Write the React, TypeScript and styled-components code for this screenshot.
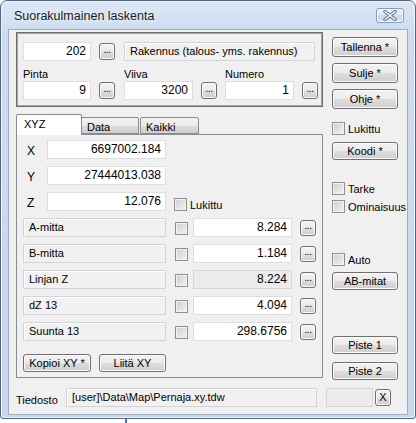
import React from "react";
import styled, { createGlobalStyle } from "styled-components";

const GlobalStyle = createGlobalStyle`
  html, body {
    margin: 0;
    padding: 0;
    background: #ffffff;
  }
  body {
    font-family: "Liberation Sans", Arial, sans-serif;
    font-size: 11px;
    color: #000;
  }
  * {
    box-sizing: border-box;
  }
`;

const Window = styled.div`
  width: 416px;
  height: 419px;
  border: 1px solid #56677d;
  border-radius: 7px 7px 3px 3px;
  background: linear-gradient(#dce8f6 0px, #cddcf0 30px, #c6d7ee 100%);
  box-shadow: inset 0 0 0 1px #eef4fb;
  display: flex;
  flex-direction: column;
  padding: 0 7px 3px 7px;
`;

const TitleBar = styled.div`
  height: 28px;
  display: flex;
  align-items: flex-start;
  justify-content: space-between;
`;

const Title = styled.span`
  margin: 8px 0 0 6px;
  font-size: 12.5px;
  color: #1b1b1b;
  text-shadow: 0 0 6px #ffffff;
`;

const CloseButton = styled.div`
  width: 28px;
  height: 15px;
  margin: 7px 4px 0 0;
  border: 1px solid #8b9bb0;
  border-radius: 3px;
  background: linear-gradient(#eef3f9, #dbe5f1 50%, #ccd9ea 50%, #d7e2ef);
  box-shadow: inset 0 0 0 1px #f6f9fc;
  display: flex;
  align-items: center;
  justify-content: center;
`;

const Client = styled.div`
  flex: 1;
  background: #f0f0f0;
  border: 1px solid #9fb0c6;
  padding: 2px 9px 0 7px;
  display: flex;
  flex-direction: column;
`;

const MainRow = styled.div`
  display: flex;
  gap: 9px;
`;

const LeftColumn = styled.div`
  width: 307px;
  display: flex;
  flex-direction: column;
`;

const GroupBox = styled.div`
  height: 75px;
  border: 1px solid #6e6e6e;
  box-shadow: inset 0 0 0 1px #a4a4a4;
  padding: 9px 0 0 6px;
  display: grid;
  grid-template-columns: 92px 92px 92px;
  grid-template-rows: 19px 20px 19px;
  column-gap: 9px;
`;

const WideCell = styled.div`
  grid-column: 2 / span 2;
`;

const FieldPair = styled.div`
  display: flex;
  align-items: center;
  gap: 8px;
`;

const GroupLabel = styled.div`
  align-self: end;
  padding-bottom: 1px;
`;

const Input = styled.div<{ $width: number; $readOnly?: boolean }>`
  width: ${(p) => p.$width}px;
  height: 19px;
  flex-shrink: 0;
  background: ${(p) => (p.$readOnly ? "#ececec" : "#ffffff")};
  border: 1px solid ${(p) => (p.$readOnly ? "#d6d6d6" : "#dedede")};
  font-size: 12px;
  line-height: 17px;
  text-align: right;
  padding: 0 4px;
  white-space: nowrap;
  overflow: hidden;
`;

const ReadOnlyBox = styled.div<{ $width: number }>`
  width: ${(p) => p.$width}px;
  height: 19px;
  flex-shrink: 0;
  background: #f1f1f1;
  border: 1px solid #d4d4d4;
  box-shadow: inset 1px 1px 0 #ffffff;
  line-height: 17px;
  padding: 0 5px;
  white-space: nowrap;
  overflow: hidden;
`;

const Button = styled.div<{ $width?: number; $height?: number }>`
  width: ${(p) => (p.$width ? `${p.$width}px` : "100%")};
  height: ${(p) => p.$height ?? 20}px;
  flex-shrink: 0;
  border: 1px solid #707070;
  border-radius: 3px;
  background: linear-gradient(#f3f3f3 0%, #ebebeb 48%, #dddddd 52%, #cfcfcf 100%);
  box-shadow: inset 0 0 0 1px #fbfbfb;
  display: flex;
  align-items: center;
  justify-content: center;
  font-size: 11px;
  line-height: 1;
  white-space: nowrap;
`;

const DotsButton = styled(Button)`
  width: 16px;
  height: 17px;
  font-size: 10px;
  align-items: flex-end;
  padding-bottom: 4px;
  letter-spacing: -0.5px;
`;

const ClearButton = styled(Button)`
  width: 16px;
  height: 17px;
  margin-left: 2px;
`;

const TabStrip = styled.div`
  margin-top: 7px;
  height: 20px;
  display: flex;
  align-items: flex-end;
  position: relative;
  z-index: 1;
`;

const Tab = styled.div<{ $active?: boolean; $width: number; $gap?: number }>`
  width: ${(p) => p.$width}px;
  height: ${(p) => (p.$active ? 21 : 17)}px;
  margin-bottom: ${(p) => (p.$active ? -1 : 0)}px;
  margin-left: ${(p) => p.$gap ?? 0}px;
  margin-right: -1px;
  border: 1px solid #898c95;
  border-bottom: ${(p) => (p.$active ? "none" : "1px solid #898c95")};
  border-radius: 2px 2px 0 0;
  background: ${(p) =>
    p.$active ? "#ffffff" : "linear-gradient(#f2f2f2, #ebebeb 50%, #dddddd 50%, #cfcfcf)"};
  padding: ${(p) => (p.$active ? "3px 0 0 7px" : "3px 0 0 5px")};
  font-size: 11px;
`;

const TabPanel = styled.div`
  height: 244px;
  border: 1px solid #898c95;
  background: #f0f0f0;
  padding: 5px 0 0 6px;
  display: flex;
  flex-direction: column;
  gap: 7px;
`;

const Row = styled.div`
  height: 19px;
  display: flex;
  align-items: center;
`;

const AxisLabel = styled.div`
  width: 24px;
  padding: 3px 0 0 4px;
  font-size: 12px;
  align-self: center;
`;

const CheckLabel = styled.label<{ $left?: number; $top?: number }>`
  display: flex;
  align-items: center;
  gap: 3px;
  margin-left: ${(p) => p.$left ?? 0}px;
  margin-top: ${(p) => p.$top ?? 0}px;
  font-size: 11px;
  white-space: nowrap;
`;

const CheckBox = styled.span`
  width: 13px;
  height: 13px;
  flex-shrink: 0;
  display: inline-block;
  border: 1px solid #8f8f8f;
  background: linear-gradient(135deg, #cdcdcd, #f4f4f4);
  box-shadow: inset 0 0 0 1px #f3f3f3;
`;

const RowCheck = styled(CheckBox)`
  margin: 2px 5px 0 9px;
`;

const RowButton = styled(DotsButton)`
  height: 16px;
  margin-left: 8px;
`;

const ButtonRow = styled.div`
  margin-top: 6px;
  display: flex;
  gap: 8px;
`;

const RightColumn = styled.div`
  width: 66px;
  display: flex;
  flex-direction: column;
  padding-top: 5px;
`;

const Spacer = styled.div<{ $h: number }>`
  height: ${(p) => p.$h}px;
  flex-shrink: 0;
`;

const FileRow = styled.div`
  margin-top: 8px;
  display: flex;
  align-items: center;
`;

const FileLabel = styled.div`
  width: 50px;
  padding: 5px 0 0 0;
  font-size: 11px;
`;

const FileSpare = styled.div`
  width: 47px;
  height: 19px;
  margin-left: 9px;
  background: #ececec;
  border: 1px solid #d6d6d6;
`;

const Tick = styled.div`
  width: 2px;
  height: 4px;
  margin-left: 125px;
  background: #2f7ad8;
`;

const CloseIcon = () => (
  <svg width="14" height="11" viewBox="0 0 14 11">
    <path d="M2 1.5 L12 9.5 M12 1.5 L2 9.5" stroke="#5f6f85" strokeWidth="3.4" strokeLinecap="round" />
    <path d="M2 1.5 L12 9.5 M12 1.5 L2 9.5" stroke="#f4f7fb" strokeWidth="1.6" strokeLinecap="round" />
  </svg>
);

type DataRowProps = { label: string; value: string; readOnly?: boolean };

const DataRow = ({ label, value, readOnly }: DataRowProps) => (
  <Row>
    <ReadOnlyBox $width={143}>{label}</ReadOnlyBox>
    <RowCheck />
    <Input $width={99} $readOnly={readOnly}>
      {value}
    </Input>
    <RowButton>...</RowButton>
  </Row>
);

const dataRows: DataRowProps[] = [
  { label: "A-mitta", value: "8.284" },
  { label: "B-mitta", value: "1.184" },
  { label: "Linjan Z", value: "8.224", readOnly: true },
  { label: "dZ 13", value: "4.094" },
  { label: "Suunta 13", value: "298.6756" },
];

const App = () => {
  return (
    <>
      <GlobalStyle />
      <Window>
        <TitleBar>
          <Title>Suorakulmainen laskenta</Title>
          <CloseButton>
            <CloseIcon />
          </CloseButton>
        </TitleBar>
        <Client>
          <MainRow>
            <LeftColumn>
              <GroupBox>
                <FieldPair>
                  <Input $width={68}>202</Input>
                  <DotsButton>...</DotsButton>
                </FieldPair>
                <WideCell>
                  <ReadOnlyBox $width={191}>Rakennus (talous- yms. rakennus)</ReadOnlyBox>
                </WideCell>
                <GroupLabel>Pinta</GroupLabel>
                <GroupLabel>Viiva</GroupLabel>
                <GroupLabel>Numero</GroupLabel>
                <FieldPair>
                  <Input $width={68}>9</Input>
                  <DotsButton>...</DotsButton>
                </FieldPair>
                <FieldPair>
                  <Input $width={69}>3200</Input>
                  <DotsButton>...</DotsButton>
                </FieldPair>
                <FieldPair>
                  <Input $width={69}>1</Input>
                  <DotsButton>...</DotsButton>
                </FieldPair>
              </GroupBox>

              <TabStrip>
                <Tab $active $width={66}>XYZ</Tab>
                <Tab $width={58}>Data</Tab>
                <Tab $width={59} $gap={2}>Kaikki</Tab>
              </TabStrip>
              <TabPanel>
                <Row>
                  <AxisLabel>X</AxisLabel>
                  <Input $width={119}>6697002.184</Input>
                </Row>
                <Row>
                  <AxisLabel>Y</AxisLabel>
                  <Input $width={119}>27444013.038</Input>
                </Row>
                <Row>
                  <AxisLabel>Z</AxisLabel>
                  <Input $width={119}>12.076</Input>
                  <CheckLabel $left={8} $top={6}>
                    <CheckBox />
                    Lukittu
                  </CheckLabel>
                </Row>
                {dataRows.map((r) => (
                  <DataRow key={r.label} {...r} />
                ))}
                <ButtonRow>
                  <Button $width={68} $height={18}>Kopioi XY *</Button>
                  <Button $width={67} $height={18}>Liitä XY</Button>
                </ButtonRow>
              </TabPanel>
            </LeftColumn>

            <RightColumn>
              <Button>Tallenna *</Button>
              <Spacer $h={6} />
              <Button>Sulje *</Button>
              <Spacer $h={6} />
              <Button>Ohje *</Button>
              <Spacer $h={13} />
              <CheckLabel>
                <CheckBox />
                Lukittu
              </CheckLabel>
              <Spacer $h={7} />
              <Button $height={18}>Koodi *</Button>
              <Spacer $h={22} />
              <CheckLabel>
                <CheckBox />
                Tarke
              </CheckLabel>
              <Spacer $h={5} />
              <CheckLabel>
                <CheckBox />
                Ominaisuus
              </CheckLabel>
              <Spacer $h={40} />
              <CheckLabel>
                <CheckBox />
                Auto
              </CheckLabel>
              <Spacer $h={6} />
              <Button $height={18}>AB-mitat</Button>
              <Spacer $h={46} />
              <Button $height={18}>Piste 1</Button>
              <Spacer $h={8} />
              <Button $height={18}>Piste 2</Button>
            </RightColumn>
          </MainRow>

          <FileRow>
            <FileLabel>Tiedosto</FileLabel>
            <ReadOnlyBox $width={251}>[user]\Data\Map\Pernaja.xy.tdw</ReadOnlyBox>
            <FileSpare />
            <ClearButton>X</ClearButton>
          </FileRow>
        </Client>
      </Window>
      <Tick />
    </>
  );
};

export default App;
